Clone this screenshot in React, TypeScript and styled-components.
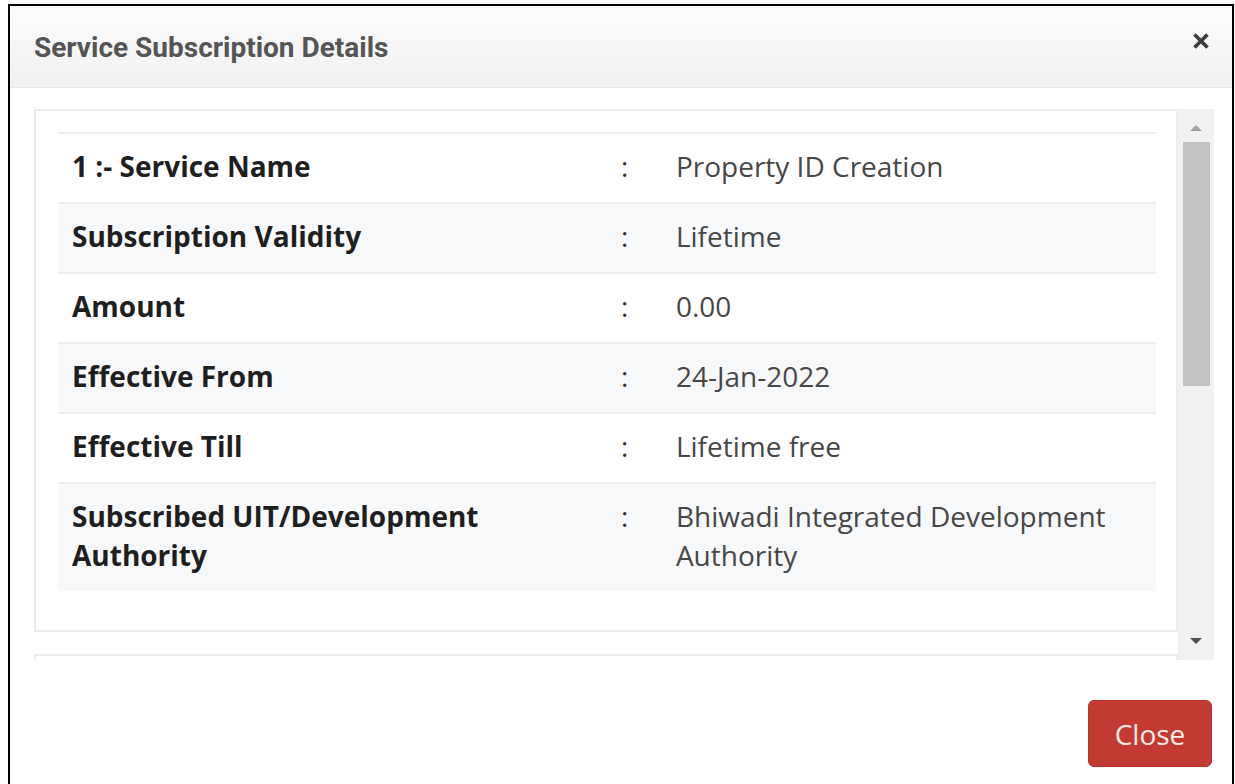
import styled, { createGlobalStyle } from "styled-components";

const GlobalStyle = createGlobalStyle`
  html, body {
    margin: 0;
    padding: 0;
    background: #fff;
    overflow: hidden;
  }
  body {
    font-family: "Open Sans", "Liberation Sans", sans-serif;
  }
`;

type Row = { label: string; value: string };

const rows: Row[] = [
  { label: "1 :- Service Name", value: "Property ID Creation" },
  { label: "Subscription Validity", value: "Lifetime" },
  { label: "Amount", value: "0.00" },
  { label: "Effective From", value: "24-Jan-2022" },
  { label: "Effective Till", value: "Lifetime free" },
  {
    label: "Subscribed UIT/Development Authority",
    value: "Bhiwadi Integrated Development Authority",
  },
];

const CloseIcon = () => (
  <svg width="18" height="18" viewBox="0 0 18 18">
    <path
      d="M2.5 2.5 L15.5 15.5 M15.5 2.5 L2.5 15.5"
      stroke="#3c3c3c"
      strokeWidth="3.6"
      strokeLinecap="butt"
    />
  </svg>
);

const App = () => {
  return (
    <>
      <GlobalStyle />
      <Modal>
        <Header>
          <Title>Service Subscription Details</Title>
          <DismissButton aria-label="close">
            <CloseIcon />
          </DismissButton>
        </Header>

        <Body>
          <ScrollArea>
            <ScrollContent>
              <Card>
                <DetailTable>
                  <colgroup>
                    <Col $width={50} />
                    <Col $width={5} />
                    <Col $width={45} />
                  </colgroup>
                  <tbody>
                    {rows.map((row, index) => (
                      <DetailRow key={index} $striped={index % 2 === 1}>
                        <LabelCell>{row.label}</LabelCell>
                        <ColonCell>:</ColonCell>
                        <ValueCell>{row.value}</ValueCell>
                      </DetailRow>
                    ))}
                  </tbody>
                </DetailTable>
              </Card>
              <Card />
            </ScrollContent>

            {/* vertical scrollbar */}
            <ScrollBar>
              <Arrow $dir="up" />
              <Track>
                <Thumb />
              </Track>
              <Arrow $dir="down" />
            </ScrollBar>
          </ScrollArea>
        </Body>

        <Footer>
          <CloseButton>Close</CloseButton>
        </Footer>
      </Modal>
    </>
  );
};

export default App;

const Modal = styled.div`
  margin: 4px 0 0 8px;
  width: 1226px;
  height: 800px;
  box-sizing: border-box;
  border: 2px solid #000;
  border-bottom: none;
  background: #fff;
  display: flex;
  flex-direction: column;
`;

const Header = styled.div`
  height: 82px;
  box-sizing: border-box;
  padding: 0 22px 0 24px;
  display: flex;
  align-items: center;
  justify-content: space-between;
  background: linear-gradient(to bottom, #fbfbfb 0%, #f1f1f1 100%);
  border-bottom: 1px solid #e6e6e6;
`;

const Title = styled.h4`
  margin: 0;
  padding-top: 1px;
  font-family: Roboto, "Liberation Sans", sans-serif;
  font-weight: 700;
  font-size: 28px;
  color: #555;
`;

const DismissButton = styled.button`
  border: none;
  background: transparent;
  padding: 0;
  margin-top: -12px;
  display: flex;
  cursor: pointer;
`;

const Body = styled.div`
  padding: 21px 18px 0 24px;
`;

const ScrollArea = styled.div`
  height: 551px;
  display: flex;
  overflow: hidden;
`;

const ScrollContent = styled.div`
  flex: 1;
  display: flex;
  flex-direction: column;
  gap: 22px;
`;

const Card = styled.div`
  flex-shrink: 0;
  border: 2px solid #ececec;
  padding: 21px 20px 39px 22px;
  min-height: 40px;
`;

const DetailTable = styled.table`
  width: 100%;
  border-collapse: collapse;
  table-layout: fixed;
`;

const Col = styled.col<{ $width: number }>`
  width: ${({ $width }) => $width}%;
`;

const DetailRow = styled.tr<{ $striped: boolean }>`
  background: ${({ $striped }) => ($striped ? "#f7f8fa" : "#fff")};
  border-top: 2px solid #ededed;
`;

const Cell = styled.td`
  padding: 13px 14px 16px;
  font-size: 28px;
  line-height: 39px;
  vertical-align: top;
`;

const LabelCell = styled(Cell)`
  font-weight: 700;
  color: #1f1f1f;
`;

const ColonCell = styled(Cell)`
  color: #333;
`;

const ValueCell = styled(Cell)`
  color: #474747;
`;

const ScrollBar = styled.div`
  width: 36px;
  flex-shrink: 0;
  background: #f1f1f1;
  display: flex;
  flex-direction: column;
  align-items: center;
`;

const Arrow = styled.div<{ $dir: "up" | "down" }>`
  width: 0;
  height: 0;
  flex-shrink: 0;
  margin: ${({ $dir }) => ($dir === "up" ? "16px 0 11px" : "10px 0 16px")};
  border-left: 6px solid transparent;
  border-right: 6px solid transparent;
  ${({ $dir }) =>
    $dir === "up"
      ? "border-bottom: 6px solid #a3a3a3;"
      : "border-top: 6px solid #505050;"}
`;

const Track = styled.div`
  flex: 1;
  width: 100%;
  padding: 0 4px 0 5px;
  box-sizing: border-box;
`;

const Thumb = styled.div`
  height: 244px;
  background: #c1c1c1;
`;

const Footer = styled.div`
  display: flex;
  justify-content: flex-end;
  padding: 40px 20px 0;
`;

const CloseButton = styled.button`
  width: 124px;
  height: 67px;
  border: 1px solid #b8322b;
  border-radius: 6px;
  background: #c23a31;
  color: #fbecea;
  font-family: "Open Sans", "Liberation Sans", sans-serif;
  font-size: 28px;
  cursor: pointer;
`;
